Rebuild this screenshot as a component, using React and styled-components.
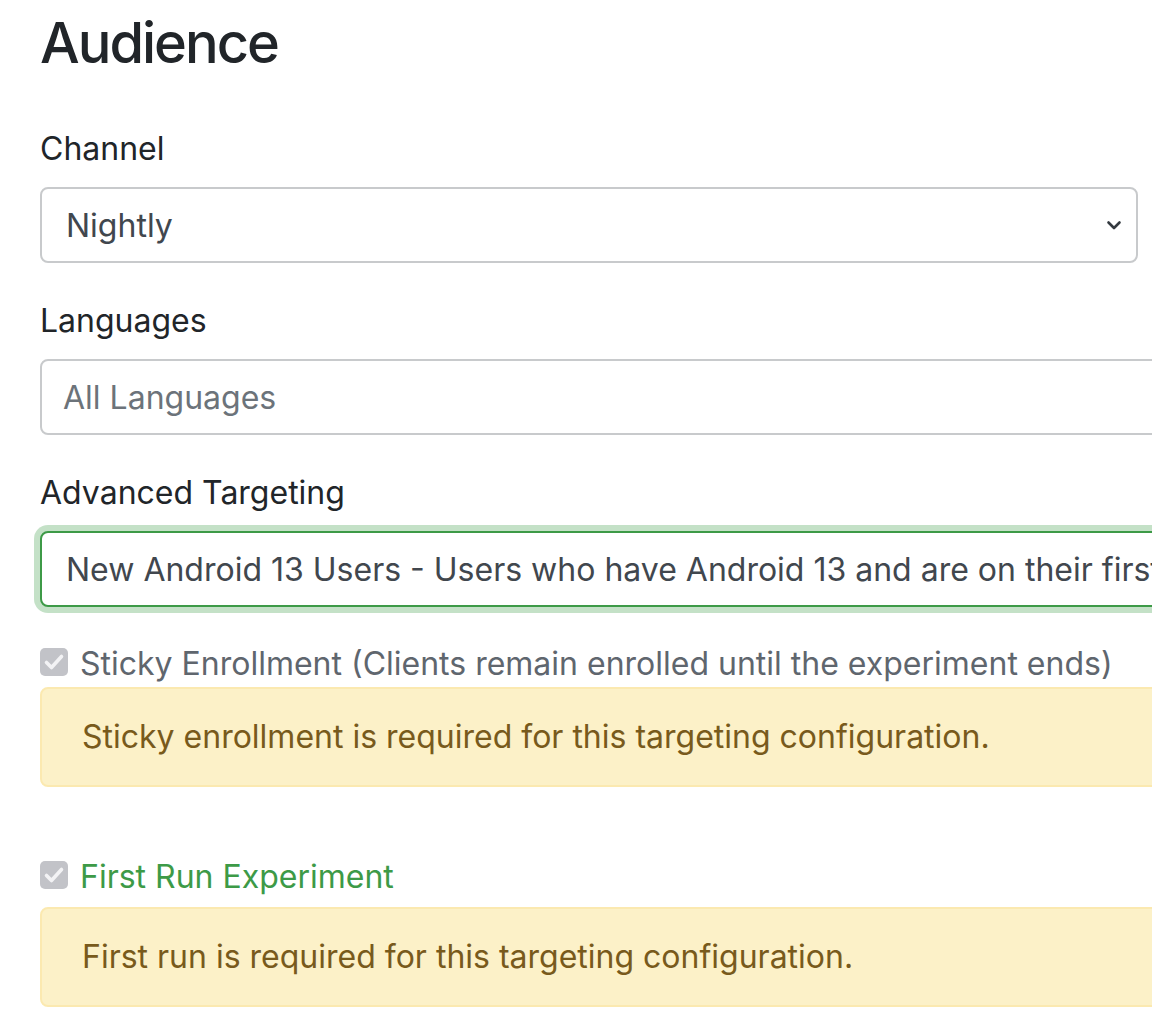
import React from "react";
import styled, { createGlobalStyle } from "styled-components";

const GlobalStyle = createGlobalStyle`
  html, body {
    margin: 0;
    padding: 0;
    background: #ffffff;
    overflow: hidden;
  }
  body {
    font-family: Inter, "Noto Sans", "Liberation Sans", sans-serif;
    color: #212529;
  }
`;

const Page = styled.div`
  width: 1300px;
  padding: 10px 0 0 40px;
  box-sizing: border-box;
`;

const Title = styled.h3`
  margin: 0 0 46px;
  font-size: 56px;
  line-height: 67px;
  font-weight: 500;
  color: #212529;
  letter-spacing: -2px;
`;

const FormGroup = styled.div`
  margin-bottom: 32px;
`;

const Label = styled.div`
  padding-top: 2px;
  margin-bottom: 14px;
  font-size: 32px;
  line-height: 48px;
  color: #212529;
`;

const Control = styled.div`
  display: flex;
  align-items: center;
  justify-content: space-between;
  box-sizing: border-box;
  width: ${(p) => p.$width || "1260px"};
  height: 76px;
  padding: 0 ${(p) => (p.$select ? "14px" : "24px")} 0 ${(p) => p.$padLeft || "24px"};
  border: 2px solid ${(p) => (p.$valid ? "#3d9a47" : "#c8cacc")};
  border-radius: 8px;
  box-shadow: ${(p) => (p.$valid ? "0 0 0 6px rgba(61, 154, 71, 0.3)" : "none")};
  background: #fff;
  font-size: 32px;
  color: ${(p) => (p.$placeholder ? "#6c737a" : "#41474e")};
  white-space: nowrap;
  overflow: hidden;
`;

const Chevron = () => (
  <svg width="16" height="12" viewBox="0 0 16 12">
    <path d="M2.5 3.5 L8 9 L13.5 3.5" fill="none" stroke="#343a40" strokeWidth="2.6" strokeLinecap="round" strokeLinejoin="round" />
  </svg>
);

const CheckRow = styled.div`
  display: flex;
  align-items: center;
  gap: 12px;
  height: 48px;
  margin-top: ${(p) => p.$mt || "0px"};
  font-size: 32px;
  color: ${(p) => p.$color};
  white-space: nowrap;
`;

const Box = styled.span`
  display: inline-flex;
  width: 28px;
  height: 28px;
  flex-shrink: 0;
  margin-top: -2px;
`;

const CheckBox = () => (
  <Box>
    <svg width="28" height="28" viewBox="0 0 28 28">
      <rect x="0" y="0" width="28" height="28" rx="5" fill="#c2c3c8" />
      <path d="M6.5 14.5 L11.5 19.5 L21.5 8.5" fill="none" stroke="#f3f3f5" strokeWidth="3.6" strokeLinecap="round" strokeLinejoin="round" />
    </svg>
  </Box>
);

const Alert = styled.div`
  box-sizing: border-box;
  width: 1260px;
  margin-top: ${(p) => p.$mt || "0px"};
  margin-bottom: ${(p) => p.$mb || "0px"};
  padding: 24px 40px 24px 40px;
  border: 2px solid #fbe9b0;
  border-radius: 8px;
  background: #fcf1c8;
  color: #785a1c;
  font-size: 32px;
  line-height: 48px;
  white-space: nowrap;
`;

export default function App() {
  return (
    <Page>
      <GlobalStyle />
      <Title>Audience</Title>

      <FormGroup>
        <Label>Channel</Label>
        <Control $select $width="1098px">
          <span>Nightly</span>
          <Chevron />
        </Control>
      </FormGroup>

      <FormGroup>
        <Label>Languages</Label>
        <Control $placeholder $padLeft="21px">
          <span>All Languages</span>
        </Control>
      </FormGroup>

      <FormGroup>
        <Label>Advanced Targeting</Label>
        <Control $valid>
          <span>New Android 13 Users - Users who have Android 13 and are on their first run of the application</span>
        </Control>
      </FormGroup>

      <CheckRow $color="#5f666e">
        <CheckBox />
        <span>Sticky Enrollment (Clients remain enrolled until the experiment ends)</span>
      </CheckRow>
      <Alert $mb="65px">Sticky enrollment is required for this targeting configuration.</Alert>

      <CheckRow $color="#3d9a47">
        <CheckBox />
        <span>First Run Experiment</span>
      </CheckRow>
      <Alert $mt="7px">First run is required for this targeting configuration.</Alert>
    </Page>
  );
}
